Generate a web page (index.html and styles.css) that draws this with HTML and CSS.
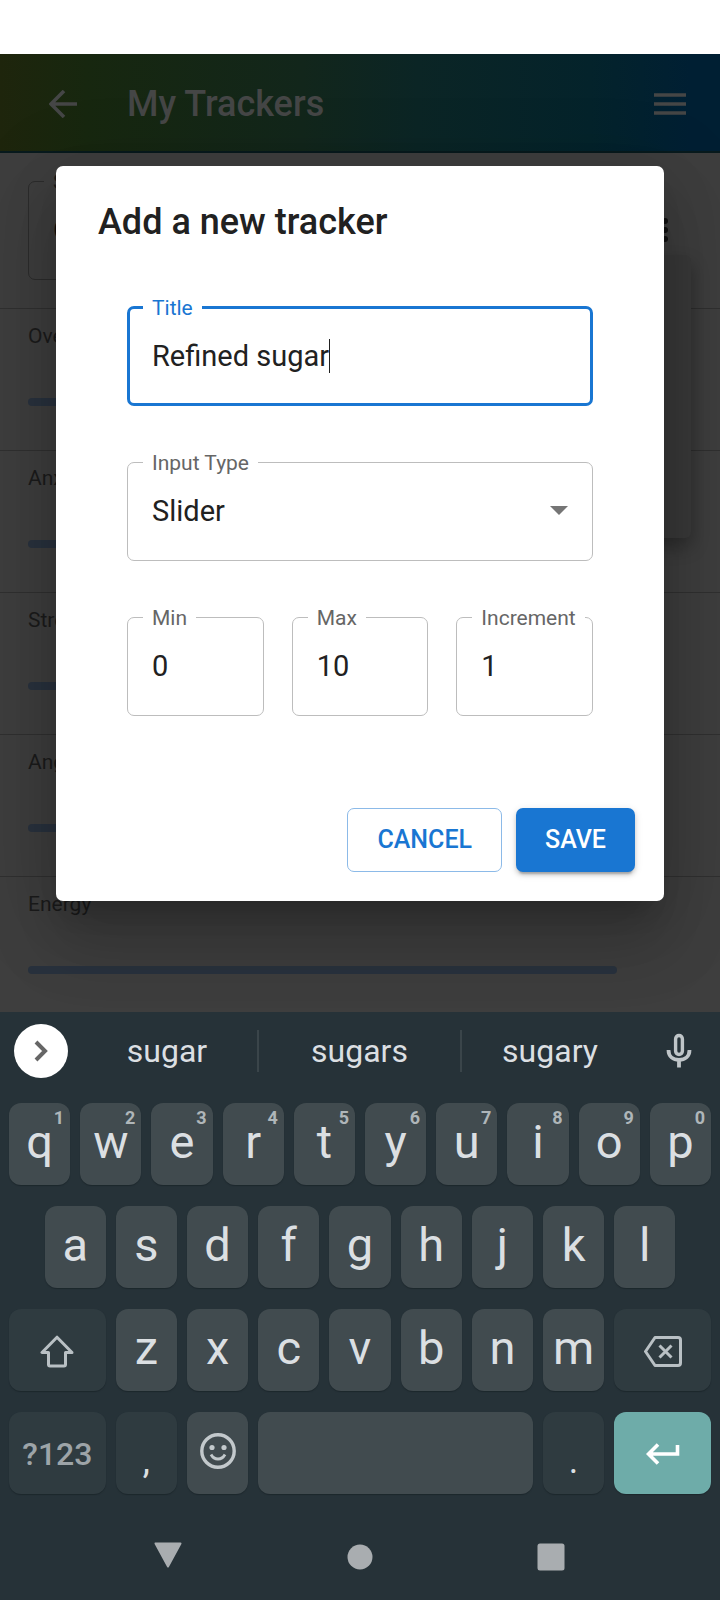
FILE: index.html
```html
<!DOCTYPE html>
<html lang="en">
<head>
<meta charset="utf-8">
<meta name="viewport" content="width=device-width, initial-scale=1">
<title>My Trackers</title>
<link rel="stylesheet" href="styles.css">
</head>
<body>
<div class="status-bar"></div>
<main class="app">
  <header class="app-bar">
    <button class="icon-button" aria-label="Back"><svg width="28" height="28" viewBox="0 0 28 28"><path d="M15 1 2 14l13 13M2 14h26" fill="none" stroke="currentColor" stroke-width="3.6"/></svg></button>
    <h1 class="app-title">My Trackers</h1>
    <button class="icon-button" aria-label="Menu"><svg width="32" height="22" viewBox="0 0 32 22"><path d="M0 2h32M0 11h32M0 20h32" fill="none" stroke="currentColor" stroke-width="3.6"/></svg></button>
  </header>
  <div class="page">
    <section class="toolbar">
      <fieldset class="page-field"><legend>Show</legend><span>Overview</span></fieldset>
      <svg class="kebab" width="6" height="24" viewBox="0 0 6 24"><circle cx="3" cy="3" r="3"/><circle cx="3" cy="12" r="3"/><circle cx="3" cy="21" r="3"/></svg>
    </section>
    <section class="tracker"><h2>Overall</h2><div class="track"></div></section>
    <section class="tracker"><h2>Anxiety</h2><div class="track"></div></section>
    <section class="tracker"><h2>Stress</h2><div class="track"></div></section>
    <section class="tracker"><h2>Anger</h2><div class="track"></div></section>
    <section class="tracker"><h2>Energy</h2><div class="track"></div></section>
    <div class="menu-panel"></div>
  </div>
  <div class="overlay">
    <form class="dialog" role="dialog" aria-labelledby="dialog-title">
      <h2 class="dialog-title" id="dialog-title">Add a new tracker</h2>
      <div class="fields">
        <fieldset class="field field-active">
          <legend><label for="title">Title</label></legend>
          <div class="control"><input class="fit" id="title" type="text" value="Refined sugar"><span class="caret"></span></div>
        </fieldset>
        <fieldset class="field">
          <legend><label for="type">Input Type</label></legend>
          <div class="control"><select id="type"><option>Slider</option></select><svg class="arrow" width="18" height="9" viewBox="0 0 18 9"><path d="M0 0h18L9 9z" fill="#757575"/></svg></div>
        </fieldset>
        <div class="field-row">
          <fieldset class="field"><legend><label for="min">Min</label></legend><div class="control"><input id="min" type="text" value="0"></div></fieldset>
          <fieldset class="field"><legend><label for="max">Max</label></legend><div class="control"><input id="max" type="text" value="10"></div></fieldset>
          <fieldset class="field"><legend><label for="increment">Increment</label></legend><div class="control"><input id="increment" type="text" value="1"></div></fieldset>
        </div>
      </div>
      <div class="actions">
        <button class="button outlined" type="button">CANCEL</button>
        <button class="button contained" type="button">SAVE</button>
      </div>
    </form>
  </div>
</main>
<section class="keyboard" aria-label="Keyboard">
  <div class="suggestions">
    <button class="expand" aria-label="More"><svg width="14" height="22" viewBox="0 0 14 22"><path d="m2 2 9 9-9 9" fill="none" stroke="#666" stroke-width="4"/></svg></button>
    <div class="words">
      <button>sugar</button>
      <button>sugars</button>
      <button>sugary</button>
    </div>
    <button class="mic" aria-label="Voice input"><svg width="26" height="36" viewBox="0 0 26 36"><rect x="9.600" y="2.500" width="6.800" height="19" rx="3.400" fill="none" stroke="currentColor" stroke-width="3.400"/><path d="M2.500 17c0 6.500 4.700 10 10.500 10s10.500-3.500 10.500-10M13 27v7.500" fill="none" stroke="currentColor" stroke-width="3.800"/></svg></button>
  </div>
  <div class="keys">
    <button class="key">q<small>1</small></button><button class="key">w<small>2</small></button><button class="key">e<small>3</small></button><button class="key">r<small>4</small></button><button class="key">t<small>5</small></button><button class="key">y<small>6</small></button><button class="key">u<small>7</small></button><button class="key">i<small>8</small></button><button class="key">o<small>9</small></button><button class="key">p<small>0</small></button>
    <button class="key indent">a</button><button class="key">s</button><button class="key">d</button><button class="key">f</button><button class="key">g</button><button class="key">h</button><button class="key">j</button><button class="key">k</button><button class="key">l</button>
    <button class="key wide dim" aria-label="Shift"><svg width="34" height="33" viewBox="0 0 34 33"><path d="M17 2.200 2 17.500h6.500v12q0 1.500 1.500 1.500h14q1.500 0 1.500-1.500v-12H32z" fill="none" stroke="#b9c0c4" stroke-width="3" stroke-linejoin="round"/></svg></button><button class="key">z</button><button class="key">x</button><button class="key">c</button><button class="key">v</button><button class="key">b</button><button class="key">n</button><button class="key">m</button><button class="key wide dim" aria-label="Delete"><svg width="38" height="31" viewBox="0 0 38 31"><path d="M11 1.500h23q2.500 0 2.500 2.500v23q0 2.500-2.500 2.500H11L1.500 15.500z" fill="none" stroke="#b9c0c4" stroke-width="3" stroke-linejoin="round"/><path d="m15.500 9.500 12 12m0-12-12 12" stroke="#b9c0c4" stroke-width="3"/></svg></button>
    <button class="key wide dim symbols">?123</button><button class="key dim punct">,</button><button class="key" aria-label="Emoji"><svg width="36" height="36" viewBox="0 0 36 36"><circle cx="18" cy="18" r="16.200" fill="none" stroke="#c3c9cc" stroke-width="3.400"/><circle cx="12" cy="14.500" r="2.600" fill="#c3c9cc"/><circle cx="24" cy="14.500" r="2.600" fill="#c3c9cc"/><path d="M11 21.500q2.500 4.500 7 4.500t7-4.500" fill="none" stroke="#c3c9cc" stroke-width="2.800"/></svg></button><button class="key space" aria-label="Space"></button><button class="key dim punct">.</button><button class="key wide enter" aria-label="Enter"><svg width="34" height="22" viewBox="0 0 34 22"><path d="M12 1.500 2.500 11l9.500 9.500M2.500 11h29V2" fill="none" stroke="#fff" stroke-width="3.600"/></svg></button>
  </div>
  <nav class="nav">
    <button aria-label="Back"><svg width="30" height="30" viewBox="0 0 30 30"><path d="M2.500 1.500h25L15 24.500z" fill="#a9adb0" stroke="#a9adb0" stroke-width="2" stroke-linejoin="round"/></svg></button>
    <button aria-label="Home"><svg width="30" height="30" viewBox="0 0 30 30"><circle cx="15" cy="15" r="12.500" fill="#a9adb0"/></svg></button>
    <button aria-label="Recent apps"><svg width="30" height="30" viewBox="0 0 30 30"><rect x="1.500" y="1.500" width="27" height="27" rx="2.500" fill="#a9adb0"/></svg></button>
  </nav>
</section>
</body>
</html>
```
FILE: styles.css
```css
* { box-sizing: border-box; }
body { margin: 0; min-height: 100vh; display: flex; flex-direction: column; background: #fff; font-family: Roboto, "Liberation Sans", sans-serif; }
button { margin: 0; padding: 0; border: 0; background: none; font: inherit; color: inherit; }
svg { display: block; }
h1, h2 { margin: 0; }
fieldset { margin: 0; min-width: 0; }

.status-bar { height: 54px; }
.app { position: relative; flex: 1; display: flex; flex-direction: column; background: #3e3e3e; overflow: hidden; }
.app-bar { height: 99px; padding: 2px 34px 0 49px; display: flex; align-items: center; gap: 50px; color: #454646; background: linear-gradient(to right, #1e250c, #17270f 12%, #12261b 42%, #0b2525 58%, #04232b 82%, #001f33 96%); border-bottom: 2px solid #081a1d; }
.app-title { flex: 1; font-size: 36px; font-weight: 500; line-height: 56px; }

.page { position: relative; }
.toolbar { display: flex; align-items: center; height: 155px; padding: 13px 52px 25px 28px; gap: 32px; }
.page-field { flex: 1; height: 110px; padding: 0 15px; border: 1px solid #2c2c2c; border-radius: 7px; font-size: 29px; color: #0c0c0c; }
.page-field legend { padding: 0 9px; font-size: 21px; line-height: 24px; color: #1a1a1a; }
.page-field span { display: block; padding: 0 9px; line-height: 72px; }
.kebab { margin-top: 10px; fill: #111; }
.tracker { height: 142px; padding: 13px 103px 0 28px; border-top: 1px solid #303030; }
.tracker:last-of-type { height: 130px; }
.tracker h2 { font-size: 21px; font-weight: 400; line-height: 28px; color: #1b1b1b; }
.track { height: 8px; margin-top: 48px; border-radius: 4px; background: #29323e; }
.menu-panel { position: absolute; top: 102px; right: 29px; width: 300px; height: 283px; border-radius: 6px; background: #393939; box-shadow: 0 9px 18px rgba(0, 0, 0, .3); }

.overlay { position: absolute; inset: 0; display: flex; align-items: center; padding: 0 56px; }
.dialog { flex: 1; background: #fff; color: #212121; border-radius: 7px; box-shadow: 0 19px 26px -12px rgba(0, 0, 0, .2), 0 42px 66px 5px rgba(0, 0, 0, .14), 0 16px 80px 14px rgba(0, 0, 0, .12); }
.dialog-title { padding: 28px 42px; font-size: 36px; font-weight: 500; line-height: 56px; }
.fields { padding: 18px 71px 0; display: flex; flex-direction: column; gap: 45px; }
.field-row { display: grid; grid-template-columns: repeat(3, 1fr); gap: 28px; }
.field { padding: 0 15px 13px; border: 1px solid #bdbdbd; border-radius: 7px; }
.field legend { padding: 0 9px; font-size: 21px; line-height: 24px; color: #666; white-space: nowrap; }
.field-active { padding: 0 13px 11px; border: 3px solid #1976d2; }
.field-active legend { color: #1976d2; }
.control { display: flex; align-items: center; height: 72px; padding: 0 9px; }
.control input, .control select { flex: 1; min-width: 0; width: 100%; height: 72px; margin: 0; padding: 0; border: 0; outline: 0; background: none; appearance: none; font: inherit; font-size: 29px; color: #212121; }
.control .fit { flex: none; width: auto; field-sizing: content; }
.caret { width: 1px; height: 34px; background: #212121; }

.actions { display: flex; justify-content: flex-end; align-items: center; gap: 14px; padding: 92px 29px 29px; }
.button { height: 64px; border-radius: 7px; font-size: 25px; font-weight: 500; padding: 0 29px; color: #1976d2; }
.outlined { border: 1px solid #8cbae8; }
.contained { background: #1976d2; color: #fff; box-shadow: 0 5px 2px -3px rgba(0, 0, 0, .2), 0 3px 4px rgba(0, 0, 0, .14), 0 2px 9px rgba(0, 0, 0, .12); }

.keyboard { background: #263238; color: #dbdfe2; }
.suggestions { display: flex; align-items: center; height: 91px; padding: 0 28px 14px 14px; }
.expand { display: grid; place-items: center; width: 54px; height: 54px; border-radius: 50%; background: #fff; }
.words { flex: 1; display: grid; grid-template-columns: 180fr 203fr 178fr; padding: 0 28px 0 9px; }
.words button { height: 42px; font-size: 32px; }
.words button + button { border-left: 2px solid #3a454a; }
.mic { color: #bfc5c8; }
.keys { display: grid; grid-template-columns: repeat(20, 1fr); gap: 21px 10px; padding: 0 9px; }
.key { position: relative; grid-column: span 2; display: grid; place-items: center; height: 82px; padding-bottom: 5px; border-radius: 12px; background: #414b4f; box-shadow: 0 1px 1px #1c272c; font-size: 47px; line-height: 56px; }
.key small { position: absolute; top: 4px; right: 6px; font-size: 18px; line-height: 22px; font-weight: 700; color: #afb6b9; }
.indent { grid-column: 2 / span 2; }
.wide { grid-column: span 3; }
.key:nth-child(20) { grid-column: 1 / span 3; }
.space { grid-column: span 8; }
.dim { padding: 2px 0 0; background: #2f3b40; }
.symbols { font-size: 32px; font-weight: 500; color: #9da4a8; }
.punct { padding: 16px 0 0; font-size: 36px; }
.enter { padding: 2px 0 0; background: #6eaca9; }
.nav { display: flex; justify-content: space-between; height: 106px; padding: 20px 154px 0 153px; align-items: center; }
```
